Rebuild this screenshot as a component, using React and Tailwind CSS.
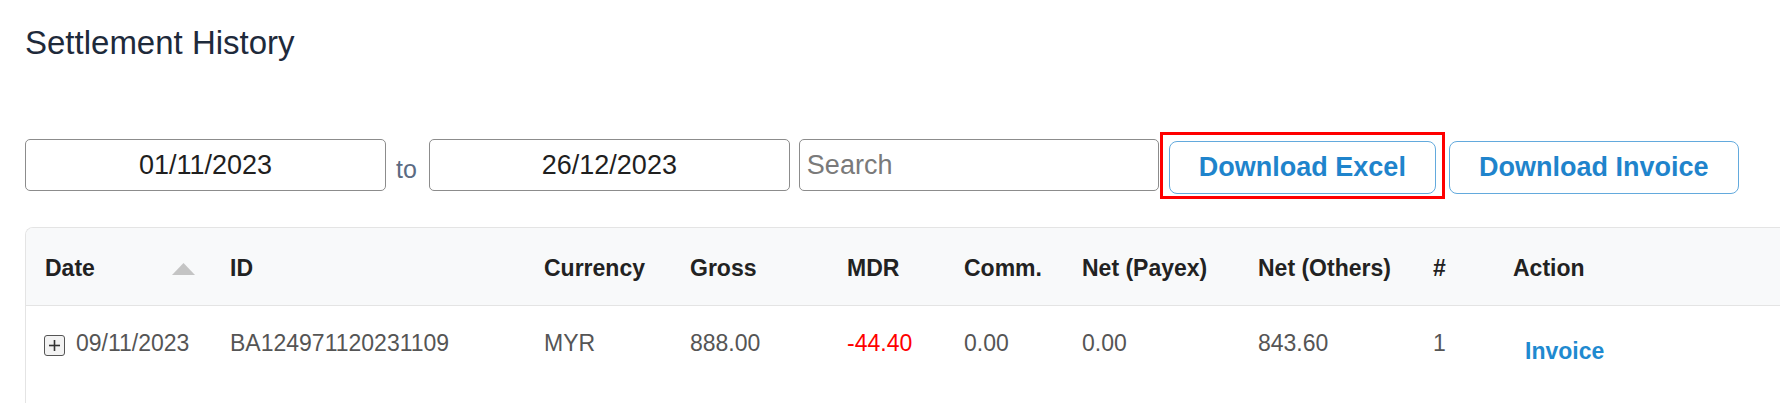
import React from "react";

const cols = "grid grid-cols-[184px_314px_146px_157px_117px_118px_176px_175px_80px_1fr]";

function SortUp() {
  return (
    <svg width="23" height="12" viewBox="0 0 23 12" className="block">
      <polygon points="11.5,0 23,12 0,12" fill="#c4c4c4" />
    </svg>
  );
}

function PlusBox() {
  return (
    <span className="shrink-0 inline-flex w-[21px] h-[21px] mt-[5px] border-[1.5px] border-[#555] rounded-[3px] bg-[#f3f3f3] items-center justify-center">
      <svg width="15" height="15" viewBox="0 0 15 15" className="block">
        <line x1="7.5" y1="2" x2="7.5" y2="13" stroke="#333" strokeWidth="1.6" />
        <line x1="2" y1="7.5" x2="13" y2="7.5" stroke="#333" strokeWidth="1.6" />
      </svg>
    </span>
  );
}

export default function App() {
  const font = { fontFamily: '"Liberation Sans", Arial, Helvetica, sans-serif' };
  return (
    <div className="w-[1780px] h-[403px] overflow-hidden bg-white" style={font}>
      <div className="pl-[25px] pt-[24px] text-[33px] leading-[38px] text-[#1e2a3b]">
        Settlement History
      </div>

      <div className="mt-[77px] pl-[25px] flex items-start">
        <div className="w-[361px] h-[52px] border border-[#8c8c8c] rounded-[5px] flex items-center justify-center text-[27px] text-[#1f1f1f]">
          01/11/2023
        </div>
        <div className="ml-[10px] mr-[12px] mt-[16px] text-[25px] leading-[28px] text-[#5b6b82]">to</div>
        <div className="w-[361px] h-[52px] border border-[#8c8c8c] rounded-[5px] flex items-center justify-center text-[27px] text-[#1f1f1f]">
          26/12/2023
        </div>
        <div className="ml-[9px] w-[360px] h-[52px] border border-[#8c8c8c] rounded-[5px] flex items-center pl-[7px] text-[27px] text-[#7a7a7a]">
          Search
        </div>
        <div className="ml-[10px] mt-[2px] relative">
          <button className="w-[267px] h-[53px] border border-[#63aadd] rounded-[8px] bg-white text-[27px] font-bold text-[#1f84cc] flex items-center justify-center">
            Download Excel
          </button>
          <div className="absolute left-[-9px] right-[-9px] top-[-9px] bottom-[-5px] border-[3px] border-[#ff0000] pointer-events-none"></div>
        </div>
        <button className="ml-[13px] mt-[2px] w-[290px] h-[53px] border border-[#63aadd] rounded-[8px] bg-white text-[27px] font-bold text-[#1f84cc] flex items-center justify-center">
          Download Invoice
        </button>
      </div>

      <div className="mt-[33px] ml-[25px] w-[1770px] border-t border-l border-[#e4e4e4] rounded-tl-[8px] overflow-hidden">
        <div className={`${cols} h-[78px] bg-[#f8f9fa] border-b border-[#e4e4e4] text-[23px] leading-[26px] font-bold text-[#222]`}>
          <div className="pl-[19px] pr-[15px] pt-[27px] flex items-start justify-between">
            <span>Date</span>
            <span className="mt-[8px]"><SortUp /></span>
          </div>
          <div className="pl-[20px] pt-[27px]">ID</div>
          <div className="pl-[20px] pt-[27px]">Currency</div>
          <div className="pl-[20px] pt-[27px]">Gross</div>
          <div className="pl-[20px] pt-[27px]">MDR</div>
          <div className="pl-[20px] pt-[27px]">Comm.</div>
          <div className="pl-[20px] pt-[27px]">Net (Payex)</div>
          <div className="pl-[20px] pt-[27px]">Net (Others)</div>
          <div className="pl-[20px] pt-[27px]">#</div>
          <div className="pl-[20px] pt-[27px]">Action</div>
        </div>
        <div className={`${cols} h-[110px] bg-white text-[23px] leading-[26px] text-[#555]`}>
          <div className="pl-[18px] pt-[24px] flex items-start gap-[11px]">
            <PlusBox />
            <span>09/11/2023</span>
          </div>
          <div className="pl-[20px] pt-[24px]">BA124971120231109</div>
          <div className="pl-[20px] pt-[24px]">MYR</div>
          <div className="pl-[20px] pt-[24px]">888.00</div>
          <div className="pl-[20px] pt-[24px] text-[#ff0000]">-44.40</div>
          <div className="pl-[20px] pt-[24px]">0.00</div>
          <div className="pl-[20px] pt-[24px]">0.00</div>
          <div className="pl-[20px] pt-[24px]">843.60</div>
          <div className="pl-[20px] pt-[24px]">1</div>
          <div className="pl-[32px] pt-[32px]">
            <span className="font-bold text-[#1f8ad0]">Invoice</span>
          </div>
        </div>
      </div>
    </div>
  );
}
